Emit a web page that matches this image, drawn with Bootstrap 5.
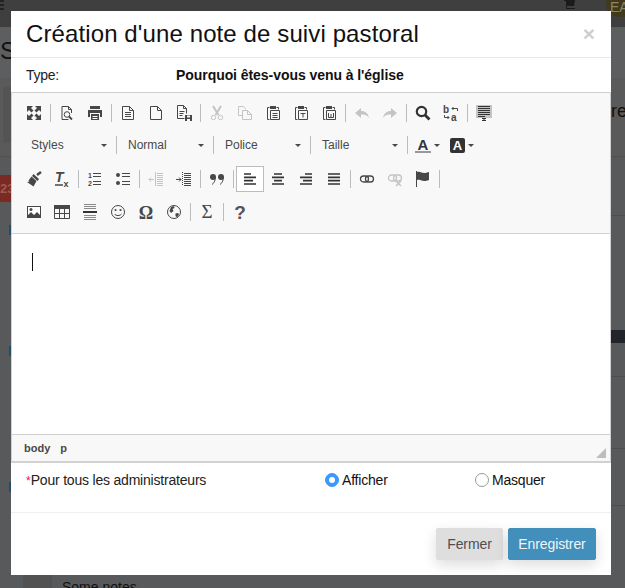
<!DOCTYPE html>
<html lang="fr">
<head>
<meta charset="utf-8">
<title>Création d'une note de suivi pastoral</title>
<link href="https://cdn.jsdelivr.net/npm/bootstrap@5.3.0/dist/css/bootstrap.min.css" rel="stylesheet">
<style>
html,body{height:588px;overflow:hidden}
body{background:#58595a;font-family:"Liberation Sans",Arial,sans-serif;font-size:14px;color:#111;position:relative}
/* page dimmed behind the dialog */
.bg-page{position:absolute;inset:0;overflow:hidden}
.bg-top{height:27px;background:#3f3f3f;position:relative}
.bg-burger{position:absolute;left:0;top:0;width:4px;height:11px;background:repeating-linear-gradient(#222 0 2px,transparent 2px 4px)}
.bg-cart{position:absolute;left:563px;top:0}
.bg-avatar{position:absolute;left:606px;top:-9px;width:30px;height:26px;border-radius:50%;background:#40391a;color:#8b8468;font-size:14px;padding:9px 0 0 4px;line-height:14px}
.bg-head{height:51px;background:#5c5e60;font-size:24px;line-height:28px;color:#111;padding-top:10px;white-space:nowrap;border-bottom:1px solid #5f5f5f;letter-spacing:.3px}
.bg-band{height:79px;background:#5a5a5a;border-bottom:1px solid #505050;position:relative}
.bg-well{position:absolute;left:3px;top:9px;width:30px;height:56px;background:#545454;border-radius:3px}
.bg-re{position:absolute;left:611px;top:22px;font-size:18px;line-height:22px;color:#111}
.bg-red{position:absolute;left:0;top:175px;width:30px;height:27px;background:#7a2a22;color:#9a5a52;font-size:13px;font-weight:700;line-height:27px}
.bg-dot{position:absolute;left:9px;width:3px;height:10px;background:#1f4f6d}
.bg-dot-a{top:225px}
.bg-dot-b{top:346px}
.bg-dot-c{top:482px}
.bg-line{position:absolute;left:611px;right:0;height:1px;background:#4e4e4e}
.bg-line-a{top:215px}
.bg-line-b{top:376px}
.bg-line-c{top:448px}
.bg-line-d{top:505px}
.bg-dark{position:absolute;left:611px;right:0;top:330px;height:13px;background:#505050}
.bg-notes{position:absolute;left:62px;top:579px;font-size:14px;line-height:16px;color:#111}
.bg-rail{position:absolute;left:23px;top:575px;width:29px;height:13px;background:#525252}
/* dialog */
.dlg-wrap{position:relative;width:600px;margin:11px 0 0 11px}
.dlg.modal-content{height:564px;border:0;border-radius:0;background:#fff}
.dlg-head.modal-header{height:47px;padding:0 15px;border-bottom:1px solid #e8e8e8;border-radius:0;align-items:center}
.dlg-title{font-size:24px;line-height:30px;font-weight:400;color:#111;margin:0;flex:1;letter-spacing:.11px}
.dlg-x{border:0;background:none;padding:0;font-size:21px;line-height:20px;font-weight:700;color:#cfcfcf;margin-right:1px}
.dlg-type{height:34px;padding:0 15px;color:#222}
.dlg-type-lbl{width:150px;letter-spacing:-.3px;flex:none}
.dlg-type-val{font-weight:700;color:#111;letter-spacing:-.06px}
/* rich text editor */
.ed{border:1px solid #d1d1d1;border-width:1px 1px 2px}
.ed-bar{height:141px;background:#f8f8f8;border-bottom:1px solid #d1d1d1;padding:4px 0 0 8px}
.tb-row{height:32px}
.tb-r3{margin-top:2px}
.tb-r4{margin-top:1px}
.tb-btn{width:28px;height:26px;flex:none;border:1px solid transparent}
.tb-btn.on{background:#fff;border-color:#bcbcbc}
.tb-btn svg{display:block;width:16px;height:16px}
.tb-sep{width:1px;height:18px;margin:0 2px;background:#bcbcbc;flex:none}
.tb-combo{width:92px;height:24px;padding-left:9px;font-size:12px;color:#484848;flex:none;position:relative}
.tb-first{margin-left:2px}
.tb-arrow{width:0;height:0;border:3px solid transparent;border-top-color:#484848;border-bottom:0;flex:none}
.tb-combo .tb-arrow{position:absolute;left:79px;top:11px}
.tb-color{width:35px;height:24px;flex:none;padding-left:5px;gap:3px}
.tb-a{width:16px;height:15px;font-size:15px;line-height:13px;font-weight:700;text-align:center;color:#333;border-bottom:2px solid #999;flex:none}
.tb-ab{width:15px;height:15px;font-size:13px;line-height:15px;font-weight:700;text-align:center;color:#fff;background:#333;border-radius:2px;flex:none}
.ed-body{height:200px;background:#fff;padding:19px 0 0 20px}
.ed-caret{width:1px;height:18px;background:#111}
.ed-path{height:27px;background:#f8f8f8;border-top:1px solid #d1d1d1;padding-left:12px;font-size:11px;font-weight:700;color:#484848;position:relative}
.ed-path span + span{margin-left:10px}
.ed-grip{position:absolute;right:4px;bottom:3px;width:0;height:0;border-style:solid;border-width:0 0 10px 10px;border-color:transparent transparent #bdbdbd transparent}
/* visibility row */
.vis{height:50px;padding:0 0 15px 15px;border-bottom:1px solid #f0f0f0;color:#222;letter-spacing:-.2px}
.vis-lbl{width:299px;flex:none}
.vis-opt{width:150px;gap:3px;flex:none}
.req{color:#e8202a;font-size:12px;letter-spacing:0}
.vis .form-check-input{width:14px;height:14px;margin:0;border:1px solid #9a9a9a;flex:none}
.vis .form-check-input:checked{background-color:#3b99fc;border-color:#3b99fc}
.vis .form-check-label{color:#111}
.dlg-foot.modal-footer{padding:15px 15px 0;border:0;gap:5px;justify-content:flex-end;align-items:flex-start}
.dlg-foot .btn{margin:0;height:32px;padding:0;font-size:14px;line-height:30px;border-radius:2px;box-shadow:0 5px 14px rgba(0,0,0,.14);letter-spacing:-.1px}
.btn-ferm{width:67px;background:#dedede;border-color:#dedede;color:#4f4f4f}
.btn-reg{width:88px;background:#428fbb;border-color:#428fbb;color:#eef5f9}
svg .k{fill:none;stroke:#474747;stroke-width:1}
svg .f{fill:#474747}
svg .g{fill:none;stroke:#c4c4c4;stroke-width:1}
svg .gf{fill:#c4c4c4}
svg text{font-family:"Liberation Sans",Arial,sans-serif}
svg .serif{font-family:"Liberation Serif",serif}
</style>
</head>
<body>
<div class="bg-page">
  <div class="bg-top">
    <span class="bg-burger"></span>
    <svg class="bg-cart" width="14" height="12" viewBox="0 0 14 12"><path d="M1 0h11l-1 6H4v2h8v1H3V1H1z" fill="#1b1b1b"/></svg>
    <span class="bg-avatar">EA</span>
  </div>
  <div class="bg-head">Su</div>
  <div class="bg-band"><span class="bg-well"></span><span class="bg-re">re</span></div>
  <span class="bg-red">23</span>
  <span class="bg-dot bg-dot-a"></span>
  <span class="bg-dot bg-dot-b"></span>
  <span class="bg-dot bg-dot-c"></span>
  <span class="bg-dark"></span>
  <span class="bg-line bg-line-a"></span>
  <span class="bg-line bg-line-b"></span>
  <span class="bg-line bg-line-c"></span>
  <span class="bg-line bg-line-d"></span>
  <span class="bg-rail"></span>
  <span class="bg-notes">Some notes</span>
</div>

<div class="dlg-wrap">
  <div class="modal-content dlg">
    <div class="modal-header dlg-head">
      <h5 class="dlg-title">Création d'une note de suivi pastoral</h5>
      <button type="button" class="dlg-x" aria-label="Fermer">×</button>
    </div>
    <div class="d-flex align-items-center dlg-type">
      <span class="dlg-type-lbl">Type:</span>
      <span class="dlg-type-val">Pourquoi êtes-vous venu à l'église</span>
    </div>

    <div class="ed">
      <div class="ed-bar">
        <div class="d-flex align-items-center tb-row">
          <span class="tb-btn d-flex align-items-center justify-content-center"><svg viewBox="0 0 16 16"><path class="f" d="M1 1h6L5 3l2.500 2.500-2 2L3 5 1 7zM15 1v6l-2-2-2.500 2.500-2-2L11 3 9 1zM1 15V9l2 2 2.500-2.500 2 2L5 13l2 2zM15 15H9l2-2-2.500-2.500 2-2L13 11l2-2z"/></svg></span>
          <span class="tb-sep"></span>
          <span class="tb-btn d-flex align-items-center justify-content-center"><svg viewBox="0 0 16 16"><path class="k" d="M9.500 14.500h-6.500v-13h6.500l3 3v3.500"/><path class="k" d="M9.500 1.500v3h3"/><circle class="k" cx="8" cy="9.500" r="2.800"/><path d="M10 11.500l3 3" stroke="#474747" stroke-width="1.800"/></svg></span>
          <span class="tb-btn d-flex align-items-center justify-content-center"><svg viewBox="0 0 16 16"><path class="f" d="M3 1h10v3H3zM1 5h14v7h-2V8H3v4H1zM4 9h8v6H4z"/><path d="M5.500 11.500h5M5.500 13.500h5" stroke="#fff"/></svg></span>
          <span class="tb-sep"></span>
          <span class="tb-btn d-flex align-items-center justify-content-center"><svg viewBox="0 0 16 16"><path class="k" d="M2.500 1.500h7l4 4v9h-11z"/><path class="k" d="M9.500 1.500v4h4M5 7.500h6M5 9.500h6M5 11.500h6"/></svg></span>
          <span class="tb-btn d-flex align-items-center justify-content-center"><svg viewBox="0 0 16 16"><path class="k" d="M2.500 1.500h7l4 4v9h-11z"/><path class="k" d="M9.500 1.500v4h4"/></svg></span>
          <span class="tb-btn d-flex align-items-center justify-content-center"><svg viewBox="0 0 16 16"><path class="k" d="M8.500 13.500h-7v-13h6l3 3v5"/><path class="k" d="M7.500 .5v3h3M3.500 6.500h5M3.500 8.500h4M3.500 10.500h3"/><path class="f" d="M9 10h7v6H9z"/><path d="M11 10.500h3v2h-3zM11 14h3v2h-3z" fill="#f8f8f8"/></svg></span>
          <span class="tb-sep"></span>
          <span class="tb-btn d-flex align-items-center justify-content-center"><svg viewBox="0 0 16 16"><path d="M4 1l5.500 9M12 1L6.500 10" stroke="#c4c4c4" stroke-width="2" fill="none"/><circle class="g" cx="4.500" cy="12.500" r="2.200" stroke-width="1.400"/><circle class="g" cx="11.500" cy="12.500" r="2.200" stroke-width="1.400"/></svg></span>
          <span class="tb-btn d-flex align-items-center justify-content-center"><svg viewBox="0 0 16 16"><path class="g" d="M5.500 10.500h-4v-9h5l2 2v1"/><path class="g" d="M5.500 5.500h5l4 4v5h-9zM10.500 5.500v4h4"/></svg></span>
          <span class="tb-btn d-flex align-items-center justify-content-center"><svg viewBox="0 0 16 16"><path class="k" d="M4.500 2.500h-2v12h2"/><path class="k" d="M11.500 2.500h2v2"/><path class="f" d="M5 1h6v3H5z"/><path class="k" d="M5.500 5.500h9v9h-9zM7.500 8.500h5M7.500 10.500h5M7.500 12.500h5"/></svg></span>
          <span class="tb-btn d-flex align-items-center justify-content-center"><svg viewBox="0 0 16 16"><path class="k" d="M4.500 2.500h-2v12h2"/><path class="k" d="M11.500 2.500h2v2"/><path class="f" d="M5 1h6v3H5z"/><path class="k" d="M5.500 5.500h9v9h-9z"/><path class="k" d="M7.500 8.500h5M10 8.500v4"/></svg></span>
          <span class="tb-btn d-flex align-items-center justify-content-center"><svg viewBox="0 0 16 16"><path class="k" d="M4.500 2.500h-2v12h2"/><path class="k" d="M11.500 2.500h2v2"/><path class="f" d="M5 1h6v3H5z"/><path class="k" d="M5.500 5.500h9v9h-9z"/><path class="k" d="M7.500 8v4.500h5V8M10 9v3"/></svg></span>
          <span class="tb-sep"></span>
          <span class="tb-btn d-flex align-items-center justify-content-center"><svg viewBox="0 0 16 16"><path class="gf" d="M7 3v3c4 0 7 2 8 7-2-3-4-3.500-8-3.500V13L1 8z"/></svg></span>
          <span class="tb-btn d-flex align-items-center justify-content-center"><svg viewBox="0 0 16 16"><path class="gf" d="M9 3v3c-4 0-7 2-8 7 2-3 4-3.500 8-3.500V13l6-5z"/></svg></span>
          <span class="tb-sep"></span>
          <span class="tb-btn d-flex align-items-center justify-content-center"><svg viewBox="0 0 16 16"><circle cx="6.500" cy="6.500" r="4.700" fill="none" stroke="#333" stroke-width="2.200"/><path d="M10 10l4.500 4.500" stroke="#333" stroke-width="2.800"/></svg></span>
          <span class="tb-btn d-flex align-items-center justify-content-center"><svg viewBox="0 0 16 16"><text x="0" y="8" font-size="10" font-weight="700" fill="#474747">b</text><text x="8" y="16" font-size="10" font-weight="700" fill="#474747">a</text><path class="k" d="M14.500 6V3.500H9M10.500 2L9 3.500 10.500 5M1.500 10v2.500H6M4.500 11L6 12.500 4.500 14"/></svg></span>
          <span class="tb-sep"></span>
          <span class="tb-btn d-flex align-items-center justify-content-center"><svg viewBox="0 0 16 16"><path d="M0 0h16v13H0z" fill="#c4c4c4"/><path d="M2 1.500h12M2 3.500h12M2 5.500h12M2 7.500h12M2 9.500h12M2 11.500h7" stroke="#333"/><path d="M6 13.500h4M8 13v2.500M6 15.500h4" stroke="#333"/></svg></span>
        </div>

        <div class="d-flex align-items-center tb-row">
          <span class="tb-combo tb-first d-flex align-items-center">Styles<span class="tb-arrow"></span></span>
          <span class="tb-sep"></span>
          <span class="tb-combo d-flex align-items-center">Normal<span class="tb-arrow"></span></span>
          <span class="tb-sep"></span>
          <span class="tb-combo d-flex align-items-center">Police<span class="tb-arrow"></span></span>
          <span class="tb-sep"></span>
          <span class="tb-combo d-flex align-items-center">Taille<span class="tb-arrow"></span></span>
          <span class="tb-sep"></span>
          <span class="tb-color d-flex align-items-center"><span class="tb-a">A</span><span class="tb-arrow"></span></span>
          <span class="tb-color d-flex align-items-center"><span class="tb-ab">A</span><span class="tb-arrow"></span></span>
        </div>

        <div class="d-flex align-items-center tb-row tb-r3">
          <span class="tb-btn d-flex align-items-center justify-content-center"><svg viewBox="0 0 16 16"><path d="M11 4l4-3" stroke="#474747" stroke-width="2.400"/><path class="f" d="M7.500 3l5.500 5-1.500 2-5.500-5zM5.500 5.500l5 4.500-3 5.500L1 11l2.500-.5L2.500 9.500z"/></svg></span>
          <span class="tb-btn d-flex align-items-center justify-content-center"><svg viewBox="0 0 16 16"><text x="1" y="11" font-size="14" font-weight="700" font-style="italic" fill="#474747">T</text><path d="M1 14h8" stroke="#474747" stroke-width="1.500"/><text x="9.500" y="15.500" font-size="9" font-weight="700" fill="#474747">x</text></svg></span>
          <span class="tb-sep"></span>
          <span class="tb-btn d-flex align-items-center justify-content-center"><svg viewBox="0 0 16 16"><text x="1" y="7" font-size="7" font-weight="700" fill="#474747">1</text><text x="1" y="14.500" font-size="7" font-weight="700" fill="#474747">2</text><path d="M6 2.500h8M6 5.500h8M6 10.500h8M6 13.500h8" stroke="#474747"/></svg></span>
          <span class="tb-btn d-flex align-items-center justify-content-center"><svg viewBox="0 0 16 16"><circle class="f" cx="3" cy="4" r="2"/><circle class="f" cx="3" cy="12" r="2"/><path d="M7 2.500h8M7 5.500h8M7 10.500h8M7 13.500h8" stroke="#474747"/></svg></span>
          <span class="tb-sep"></span>
          <span class="tb-btn d-flex align-items-center justify-content-center"><svg viewBox="0 0 16 16"><path d="M7.500 1v14M9 2.500h6M9 4.500h6M9 6.500h6M9 8.500h6M9 10.500h6M9 12.500h6M9 14.500h6" stroke="#c4c4c4"/><path d="M6 8.500H1M3 6.500l-2 2 2 2" stroke="#c4c4c4" fill="none"/></svg></span>
          <span class="tb-btn d-flex align-items-center justify-content-center"><svg viewBox="0 0 16 16"><path d="M6.500 1v14" stroke="#474747" stroke-dasharray="1 1"/><path d="M8 2.500h7M8 4.500h7M8 6.500h7M8 8.500h7M8 10.500h7M8 12.500h7M8 14.500h7" stroke="#474747"/><path d="M0 8.500h5M3 6.500l2 2-2 2" stroke="#474747" fill="none"/></svg></span>
          <span class="tb-sep"></span>
          <span class="tb-btn d-flex align-items-center justify-content-center"><svg viewBox="0 0 16 16"><circle class="f" cx="4" cy="6" r="3"/><path class="k" d="M6.300 6.500C6.300 10 5 12 3 13.500" stroke-width="2"/><circle class="f" cx="12" cy="6" r="3"/><path class="k" d="M14.300 6.500C14.300 10 13 12 11 13.500" stroke-width="2"/></svg></span>
          <span class="tb-sep"></span>
          <span class="tb-btn on d-flex align-items-center justify-content-center"><svg viewBox="0 0 16 16"><path d="M2 3h7M2 6.400h12M2 9.700h9M2 13h12" stroke="#333" stroke-width="1.700"/></svg></span>
          <span class="tb-btn d-flex align-items-center justify-content-center"><svg viewBox="0 0 16 16"><path d="M4 3h8M2 6.400h12M4 9.700h8M2 13h12" stroke="#333" stroke-width="1.700"/></svg></span>
          <span class="tb-btn d-flex align-items-center justify-content-center"><svg viewBox="0 0 16 16"><path d="M7 3h7M2 6.400h12M5 9.700h9M2 13h12" stroke="#333" stroke-width="1.700"/></svg></span>
          <span class="tb-btn d-flex align-items-center justify-content-center"><svg viewBox="0 0 16 16"><path d="M2 3h12M2 6.400h12M2 9.700h12M2 13h12" stroke="#333" stroke-width="1.700"/></svg></span>
          <span class="tb-sep"></span>
          <span class="tb-btn d-flex align-items-center justify-content-center"><svg viewBox="0 0 16 16"><rect x="1.500" y="5" width="8" height="6" rx="3" fill="none" stroke="#474747" stroke-width="1.300"/><rect x="6.500" y="5" width="8" height="6" rx="3" fill="none" stroke="#474747" stroke-width="1.300"/></svg></span>
          <span class="tb-btn d-flex align-items-center justify-content-center"><svg viewBox="0 0 16 16"><rect x="1.500" y="4" width="8" height="6" rx="3" fill="none" stroke="#c4c4c4" stroke-width="1.300"/><rect x="6.500" y="4" width="8" height="6" rx="3" fill="none" stroke="#c4c4c4" stroke-width="1.300"/><path d="M9 10l5 5M14 10l-5 5" stroke="#c4c4c4" stroke-width="1.500"/></svg></span>
          <span class="tb-btn d-flex align-items-center justify-content-center"><svg viewBox="0 0 16 16"><path d="M1.500 0v16" stroke="#474747"/><path class="f" d="M2 1c3-1 5 1 7 1s3-.5 5-1v8c-2 .8-3 1-5 1S5 8 2 9z"/></svg></span>
          <span class="tb-sep"></span>
        </div>

        <div class="d-flex align-items-center tb-row tb-r4">
          <span class="tb-btn d-flex align-items-center justify-content-center"><svg viewBox="0 0 16 16"><path class="f" d="M1 2h14v12H1z"/><path d="M2 3h12v8l-3-3-3 3-3-3-3 3z" fill="#fff"/><circle class="f" cx="5" cy="5.500" r="1.500"/></svg></span>
          <span class="tb-btn d-flex align-items-center justify-content-center"><svg viewBox="0 0 16 16"><path class="f" d="M0 1h16v4H0z"/><path class="k" d="M.5 1.500h15v13H.5zM.5 9.500h15M5.500 4v10.500M10.500 4v10.500"/></svg></span>
          <span class="tb-btn d-flex align-items-center justify-content-center"><svg viewBox="0 0 16 16"><path d="M2 .5h12M2 2.500h12M2 4.500h12M2 11.500h12M2 13.500h12M2 15.500h12" stroke="#8a8a8a"/><path d="M1 8h14" stroke="#333" stroke-width="2"/></svg></span>
          <span class="tb-btn d-flex align-items-center justify-content-center"><svg viewBox="0 0 16 16"><circle class="k" cx="8" cy="8" r="6.500"/><circle class="f" cx="5.500" cy="6" r="1.100"/><circle class="f" cx="10.500" cy="6" r="1.100"/><path class="k" d="M4.500 10c1.500 2 5.500 2 7 0"/></svg></span>
          <span class="tb-btn d-flex align-items-center justify-content-center"><svg viewBox="0 0 16 16"><text class="serif" x="8" y="14.500" text-anchor="middle" font-size="18" font-weight="700" fill="#474747">Ω</text></svg></span>
          <span class="tb-btn d-flex align-items-center justify-content-center"><svg viewBox="0 0 16 16"><circle class="k" cx="8" cy="8" r="6.500"/><path class="f" d="M5 3l3-1 .5 2-2 1 1 2-2.500 2L3.500 7zM9.500 9.500l2.500-.5 1 1.500L11 13.500 9.500 12z"/></svg></span>
          <span class="tb-sep"></span>
          <span class="tb-btn d-flex align-items-center justify-content-center"><svg viewBox="0 0 16 16"><text class="serif" x="8" y="14" text-anchor="middle" font-size="19" fill="#474747">Σ</text></svg></span>
          <span class="tb-sep"></span>
          <span class="tb-btn d-flex align-items-center justify-content-center"><svg viewBox="0 0 16 16"><text x="8" y="15" text-anchor="middle" font-size="19" font-weight="700" fill="#555">?</text></svg></span>
        </div>
      </div>

      <div class="ed-body"><div class="ed-caret"></div></div>

      <div class="ed-path d-flex align-items-center"><span>body</span><span>p</span><i class="ed-grip"></i></div>
    </div>

    <div class="d-flex align-items-center vis">
      <span class="vis-lbl"><span class="req">*</span>Pour tous les administrateurs</span>
      <div class="d-flex align-items-center vis-opt">
        <input class="form-check-input" type="radio" name="vis" id="v1" checked>
        <label class="form-check-label" for="v1">Afficher</label>
      </div>
      <div class="d-flex align-items-center vis-opt">
        <input class="form-check-input" type="radio" name="vis" id="v2">
        <label class="form-check-label" for="v2">Masquer</label>
      </div>
    </div>

    <div class="modal-footer dlg-foot">
      <button type="button" class="btn btn-ferm">Fermer</button>
      <button type="button" class="btn btn-reg">Enregistrer</button>
    </div>
  </div>
</div>
<script src="https://cdn.jsdelivr.net/npm/bootstrap@5.3.0/dist/js/bootstrap.bundle.min.js"></script>
</body>
</html>
